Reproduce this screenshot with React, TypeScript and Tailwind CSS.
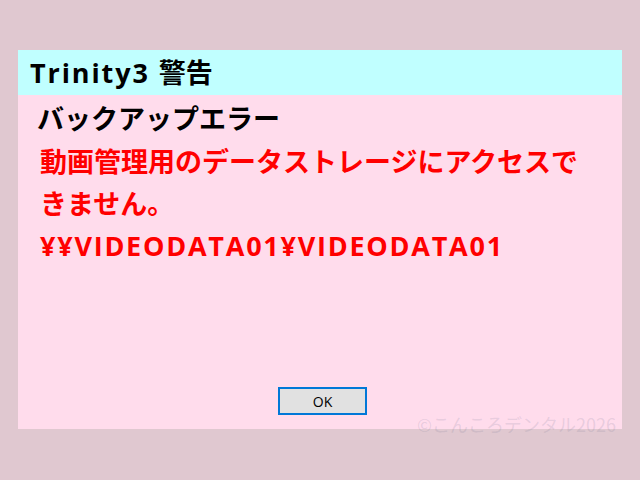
export default function App() {
  return (
    <div
      className="w-[640px] h-[480px] bg-[#e0c8d0] pt-[50px] pl-[18px]"
      style={{ fontFamily: '"Open Sans", "Noto Sans CJK JP", sans-serif' }}
    >
      <div className="relative w-[604px] h-[379px] bg-[#ffdcec] flex flex-col">
        {/* title bar */}
        <div className="h-[45px] bg-[#c0ffff] pl-[12px] flex items-center">
          <h1 className="text-[27px] font-bold text-black leading-none tracking-[0.07em]">
            Trinity3<span className="tracking-normal ml-[9px]">警告</span>
          </h1>
        </div>

        <div className="pl-[19px] pt-[6px]">
          <h2 className="text-[27px] font-bold text-black leading-[36px]">バックアップエラー</h2>
        </div>

        <div className="pl-[22px] pr-[20px] pt-[4px] text-[#ff0000] font-bold text-[27px] leading-[42px]">
          <p>動画管理用のデータストレージにアクセスできません。</p>
          <p className="tracking-[0.065em]">¥¥VIDEODATA01¥VIDEODATA01</p>
        </div>

        <div className="mt-auto mb-[14px] flex justify-center pl-[5px]">
          <button className="w-[89px] h-[28px] border-2 border-[#0078d7] bg-[#e1e1e1] text-[14px] text-black">
            OK
          </button>
        </div>

        {/* watermark */}
        <span
          className="absolute right-[6px] bottom-[-4px] text-[18px] text-[rgba(120,120,150,0.18)] leading-none pointer-events-none"
          style={{ fontFamily: '"Noto Sans CJK JP", sans-serif' }}
        >
          ©こんころデンタル2026
        </span>
      </div>
    </div>
  );
}
